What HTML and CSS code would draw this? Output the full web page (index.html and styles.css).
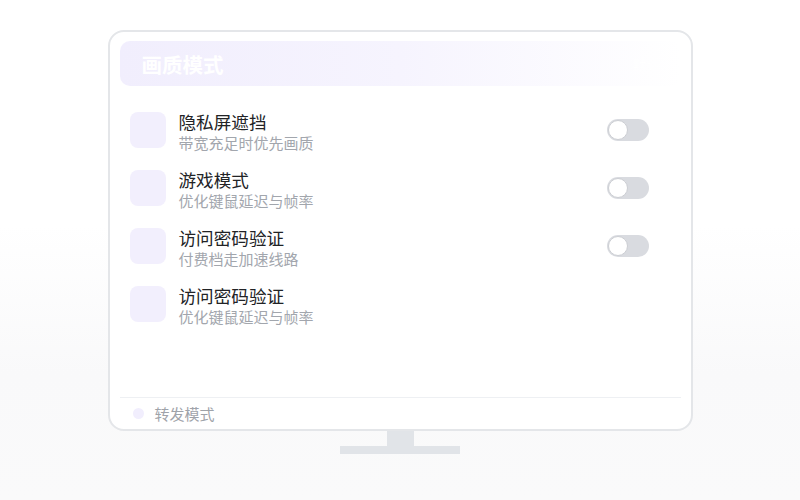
FILE: index.html
```html
<!DOCTYPE html>
<html lang="zh-CN">
<head>
    <meta charset="UTF-8">
    <meta name="viewport" content="width=device-width, initial-scale=1.0">
    <title>画质模式</title>
    <link rel="stylesheet" href="styles.css">
</head>
<body>

<div class="monitor">
    <div class="screen">
        <div class="header">
            <span class="header-title">画质模式</span>
            <span class="header-extra">默认</span>
        </div>

        <div class="list">
            <div class="row">
                <div class="row-icon"></div>
                <div class="row-text">
                    <div class="row-title">隐私屏遮挡</div>
                    <div class="row-sub">带宽充足时优先画质</div>
                </div>
                <div class="toggle"><span class="knob"></span></div>
            </div>
            <div class="row">
                <div class="row-icon"></div>
                <div class="row-text">
                    <div class="row-title">游戏模式</div>
                    <div class="row-sub">优化键鼠延迟与帧率</div>
                </div>
                <div class="toggle"><span class="knob"></span></div>
            </div>
            <div class="row">
                <div class="row-icon"></div>
                <div class="row-text">
                    <div class="row-title">访问密码验证</div>
                    <div class="row-sub">付费档走加速线路</div>
                </div>
                <div class="toggle"><span class="knob"></span></div>
            </div>
            <div class="row">
                <div class="row-icon"></div>
                <div class="row-text">
                    <div class="row-title">访问密码验证</div>
                    <div class="row-sub">优化键鼠延迟与帧率</div>
                </div>
            </div>
        </div>

        <div class="footer">
            <span class="dot"></span>
            <span class="footer-text">转发模式</span>
        </div>
    </div>
    <div class="neck"></div>
    <div class="base"></div>
</div>

</body>
</html>
```

FILE: styles.css
```css
body {
    font-family: "Noto Sans CJK SC", "Noto Sans", sans-serif;
    background: linear-gradient(to bottom, #ffffff 0%, #ffffff 45%, #f9f9fa 75%, #fafafa 100%);
    height: 500px;
    margin: 0;
    display: flex;
    justify-content: center;
}
.monitor {
    display: flex;
    flex-direction: column;
    align-items: center;
    padding-top: 30px;
}
.screen {
    width: 585px;
    height: 401px;
    box-sizing: border-box;
    background-color: #fff;
    border: 2px solid #e4e6e9;
    border-radius: 16px;
    padding: 9px 10px 8px;
    display: flex;
    flex-direction: column;
}
.header {
    height: 45px;
    border-radius: 10px;
    background: linear-gradient(to right, #f1eefd 0%, #f6f4fe 50%, rgba(255, 255, 255, 0) 100%);
    display: flex;
    align-items: center;
    justify-content: space-between;
    padding: 0 20px 0 22px;
    flex-shrink: 0;
}
.header-title {
    color: #fff;
    font-size: 20.5px;
    font-weight: 700;
}
.header-extra {
    color: #fff;
    font-size: 14px;
}
.list {
    flex: 1;
    padding: 15px 32px 0 10px;
}
.row {
    display: flex;
    align-items: center;
    height: 58px;
}
.row-icon {
    width: 36px;
    height: 36px;
    border-radius: 8px;
    background-color: #f2effd;
    flex-shrink: 0;
}
.row-text {
    flex: 1;
    margin-left: 13px;
    padding-top: 3px;
}
.row-title {
    font-size: 17.6px;
    line-height: 22px;
    color: #222326;
}
.row-sub {
    font-size: 15px;
    line-height: 20px;
    color: #a2a6ad;
}
.toggle {
    width: 42px;
    height: 22px;
    border-radius: 11px;
    background-color: #d9dbe0;
    position: relative;
    flex-shrink: 0;
}
.knob {
    position: absolute;
    left: 1px;
    top: 1px;
    width: 18px;
    height: 18px;
    border-radius: 50%;
    background-color: #fff;
    border: 1px solid #ccced3;
}
.footer {
    height: 31px;
    border-top: 1px solid #eef0f3;
    display: flex;
    align-items: center;
    padding-left: 13px;
    margin-bottom: -8px;
    flex-shrink: 0;
}
.dot {
    width: 11px;
    height: 11px;
    border-radius: 50%;
    background-color: #f1eefd;
}
.footer-text {
    margin-left: 11px;
    font-size: 15px;
    color: #9fa3aa;
}
.neck {
    width: 27px;
    height: 15px;
    background-color: #e1e4e8;
}
.base {
    width: 120px;
    height: 8px;
    background-color: #e1e4e8;
}
```
